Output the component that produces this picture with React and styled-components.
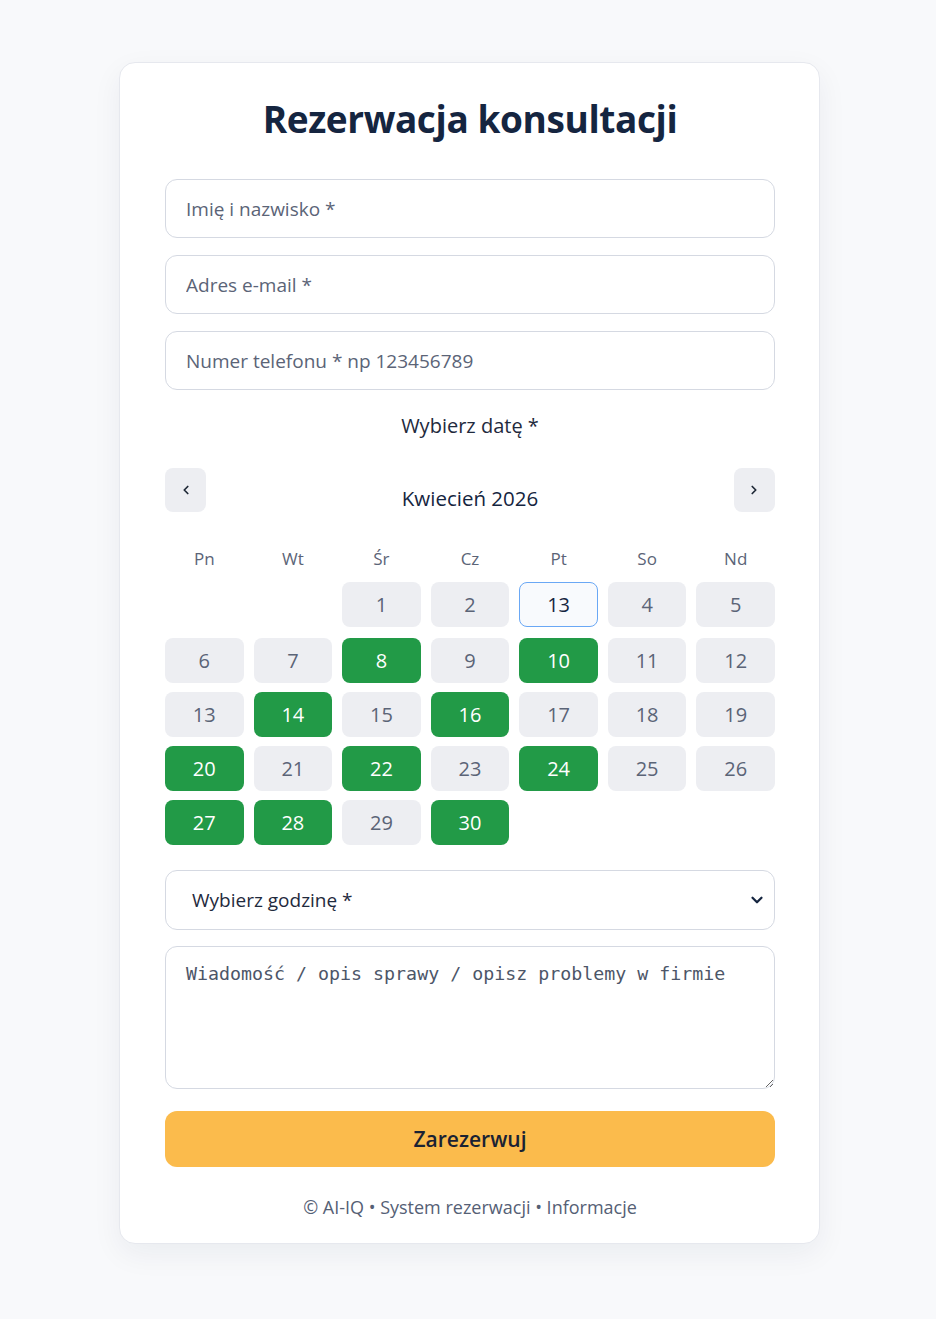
import React from 'react'
import styled, { createGlobalStyle } from 'styled-components'

const GlobalStyle = createGlobalStyle`
  body {
    margin: 0;
    background: #f8f9fb;
    font-family: "Open Sans", "Noto Sans", sans-serif;
  }
  * { box-sizing: border-box; }
`

const Page = styled.div`
  padding: 62px 0 75px 3px;
  display: flex;
  justify-content: center;
`

const Card = styled.form`
  width: 701px;
  background: #fff;
  border: 1px solid #e6e8ee;
  border-radius: 16px;
  box-shadow: 0 10px 30px rgba(20, 30, 60, 0.06);
  padding: 30px 44px 24px 45px;
  display: flex;
  flex-direction: column;
`

const Title = styled.h1`
  margin: 0 0 35px;
  text-align: center;
  font-size: 37px;
  font-weight: 700;
  color: #152540;
  letter-spacing: -0.4px;
`

const Input = styled.input`
  height: 59px;
  border: 1px solid #d5d9e2;
  border-radius: 12px;
  padding: 0 20px;
  font-family: inherit;
  font-size: 19px;
  color: #1f2937;
  margin-bottom: 17px;
  background: #fff;
  &::placeholder { color: #5b6477; }
`

const Label = styled.div`
  text-align: center;
  font-size: 20px;
  color: #1f2a3d;
  margin: 5px 0 29px;
`

const CalHeader = styled.div`
  display: flex;
  align-items: center;
  justify-content: space-between;
`

const NavButton = styled.button`
  width: 41px;
  height: 44px;
  border: none;
  border-radius: 8px;
  background: #edeef2;
  color: #1f2937;
  display: flex;
  align-items: center;
  justify-content: center;
  padding: 0;
`

const Month = styled.div`
  font-size: 20.5px;
  color: #152540;
  padding-top: 16px;
`

const Grid = styled.div`
  display: grid;
  grid-template-columns: repeat(7, 1fr);
  column-gap: 10px;
  row-gap: 9px;
  margin-top: 35px;
`

const Weekday = styled.div`
  text-align: center;
  font-size: 17px;
  color: #5b6477;
  height: 25px;
  margin-bottom: 1px;
`

const Day = styled.div`
  height: 45px;
  border-radius: 8px;
  display: flex;
  align-items: center;
  justify-content: center;
  font-size: 20px;
  background: ${p => (p.$green ? '#229a47' : p.$selected ? '#f8fafd' : '#edeef2')};
  color: ${p => (p.$green ? '#fff' : p.$selected ? '#152540' : '#5b6477')};
  border: ${p => (p.$selected ? '1.5px solid #6aa8f5' : 'none')};
  visibility: ${p => (p.$empty ? 'hidden' : 'visible')};
  margin-bottom: ${p => (p.$first ? '2px' : '0')};
`

const SelectBox = styled.div`
  margin-top: 25px;
  height: 60px;
  border: 1px solid #d5d9e2;
  border-radius: 12px;
  display: flex;
  align-items: center;
  justify-content: space-between;
  padding: 0 8px 0 26px;
  font-size: 19px;
  color: #1f2a3d;
`

const TextArea = styled.textarea`
  margin-top: 16px;
  height: 143px;
  border: 1px solid #d5d9e2;
  border-radius: 12px;
  padding: 16px 20px;
  font-family: "DejaVu Sans Mono", "Liberation Mono", monospace;
  font-size: 18.3px;
  resize: vertical;
  &::placeholder { color: #4d5668; }
`

const Submit = styled.button`
  margin-top: 22px;
  height: 56px;
  border: none;
  border-radius: 12px;
  background: #fbbb4c;
  font-family: inherit;
  font-size: 21px;
  font-weight: 600;
  color: #1a2233;
`

const Footer = styled.div`
  margin-top: 28px;
  text-align: center;
  font-size: 18px;
  color: #556075;
`

const days = [
  null, null, 1, 2, 13, 4, 5,
  6, 7, 8, 9, 10, 11, 12,
  13, 14, 15, 16, 17, 18, 19,
  20, 21, 22, 23, 24, 25, 26,
  27, 28, 29, 30,
]
const green = [8, 10, 14, 16, 20, 22, 24, 27, 28, 30]

const App = () => (
  <Page>
    <GlobalStyle />
    <Card onSubmit={e => e.preventDefault()}>
      <Title>Rezerwacja konsultacji</Title>
      <Input placeholder="Imię i nazwisko *" />
      <Input placeholder="Adres e-mail *" />
      <Input placeholder="Numer telefonu * np 123456789" />
      <Label>Wybierz datę *</Label>
      <CalHeader>
        <NavButton type="button">
          <svg width="14" height="14" viewBox="0 0 24 24" fill="none" stroke="#1f2937" strokeWidth="3" strokeLinecap="round" strokeLinejoin="round"><path d="M15 18l-6-6 6-6" /></svg>
        </NavButton>
        <Month>Kwiecień 2026</Month>
        <NavButton type="button">
          <svg width="14" height="14" viewBox="0 0 24 24" fill="none" stroke="#1f2937" strokeWidth="3" strokeLinecap="round" strokeLinejoin="round"><path d="M9 18l6-6-6-6" /></svg>
        </NavButton>
      </CalHeader>
      <Grid>
        {['Pn', 'Wt', 'Śr', 'Cz', 'Pt', 'So', 'Nd'].map(d => (
          <Weekday key={d}>{d}</Weekday>
        ))}
        {days.map((d, i) => (
          <Day
            key={i}
            $empty={d === null}
            $first={i < 7}
            $selected={i === 4}
            $green={i !== 4 && green.includes(d)}
          >
            {d}
          </Day>
        ))}
      </Grid>
      <SelectBox>
        <span>Wybierz godzinę *</span>
        <svg width="18" height="18" viewBox="0 0 24 24" fill="none" stroke="#152540" strokeWidth="3" strokeLinecap="round" strokeLinejoin="round"><path d="M6 9l6 6 6-6" /></svg>
      </SelectBox>
      <TextArea placeholder="Wiadomość / opis sprawy / opisz problemy w firmie" />
      <Submit type="submit">Zarezerwuj</Submit>
      <Footer>© AI-IQ • System rezerwacji • Informacje</Footer>
    </Card>
  </Page>
)

export default App
